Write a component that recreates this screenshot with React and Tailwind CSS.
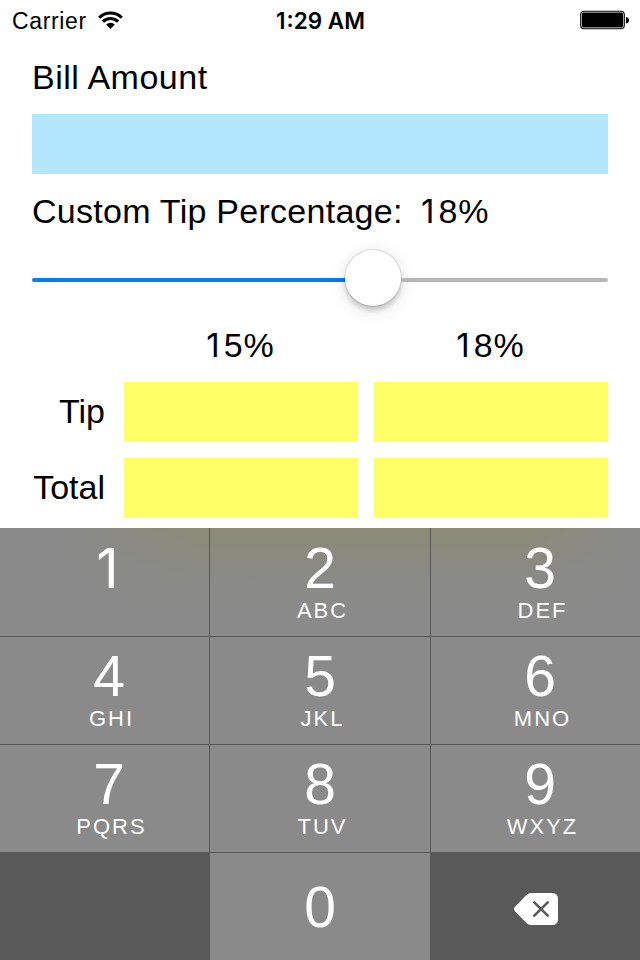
const KEYS = [
  ['1', ''], ['2', 'ABC'], ['3', 'DEF'],
  ['4', 'GHI'], ['5', 'JKL'], ['6', 'MNO'],
  ['7', 'PQRS'], ['8', 'TUV'], ['9', 'WXYZ'],
];

// Vertical rules sit at the right of column 1 and the left of column 3.
const COLUMN_STYLE = [
  'border-r border-r-[#595959] pl-[9px]',
  '',
  'border-l border-l-[#595959] pl-[9px]',
];

function StatusBar() {
  return (
    <header className="flex h-10 items-center pl-3 pr-[11px] text-[23px]">
      <div className="flex w-[200px] items-center gap-[11px]">
        <span className="w-[75px] whitespace-nowrap pt-0.5 tracking-[0.65px]">Carrier</span>
        <svg className="h-[18px] w-[25px] shrink-0" viewBox="0 0 25 18">
          <g fill="none" stroke="#000" strokeWidth="3">
            <path d="M1.2 6.7A16 16 0 0 1 23.8 6.7" />
            <path d="M4.9 10.6A10.7 10.7 0 0 1 20.1 10.6" />
          </g>
          <path d="M8.2 13.6A6 6 0 0 1 16.8 13.6L12.5 18Z" />
        </svg>
      </div>
      <div className="flex-1 whitespace-nowrap pt-0.5 text-center font-['Inter'] text-[22.5px] font-semibold"><span className="tracking-[1px]">1</span>:29 AM</div>
      <div className="flex w-[200px] items-center justify-end">
        <svg className="h-[20px] w-[49px]" viewBox="0 0 49 20">
          <rect x="0.75" y="1.25" width="43.5" height="17.5" rx="3.2" fill="none" stroke="#000" strokeWidth="1.2" />
          <rect x="2" y="2.5" width="41" height="15" rx="1.5" />
          <path d="M46 7Q49 7.5 49 10.3T46 13.5Z" />
        </svg>
      </div>
    </header>
  );
}

function Percent({ value }) {
  return (
    <>
      <span className="font-['Inter'] text-[33px] tracking-[4px]">1</span>
      <span className="tracking-[1px]">{value}</span>%
    </>
  );
}

function ResultRow({ label }) {
  return (
    <div className="flex h-[60px] items-center">
      <div className="w-[73px] pb-0.5 text-right">{label}</div>
      <div className="ml-[19px] h-full w-[234px] bg-[#ffff66]" />
      <div className="ml-4 h-full w-[234px] bg-[#ffff66]" />
    </div>
  );
}

function Digit({ value }) {
  return value === '1' ? (
    <span className="h-[54px] pr-[3px] font-['Inter'] text-[55px] font-normal leading-[54px]">{value}</span>
  ) : (
    <span className="h-[54px] text-[57px] leading-[54px]">{value}</span>
  );
}

function Key({ digit, letters, column, first }) {
  return (
    <div className={`flex h-[108px] flex-col items-center ${first ? 'pt-[13px]' : 'border-t border-t-[#595959] pt-[12px]'} ${COLUMN_STYLE[column]}`}>
      <Digit value={digit} />
      <span className="mt-1 pl-[5px] text-[22px] leading-[24px] tracking-[2px]">{letters}</span>
    </div>
  );
}

export default function App() {
  return (
    <div className="flex h-[960px] w-[640px] flex-col overflow-hidden bg-white font-['Liberation_Sans',sans-serif] text-black">
      <StatusBar />
      <main className="flex h-[488px] flex-col px-8 text-[34px] leading-[40px]">
        <div className="mt-[17px] h-[40px] tracking-[0.5px]">Bill Amount</div>
        <div className="mt-[17px] h-[60px] bg-[#b3e6ff]" />
        <div className="mt-[17px] flex h-[40px] whitespace-pre">
          <span className="w-[389px] tracking-[0.27px]">Custom Tip Percentage:</span>
          <span><Percent value="8" /></span>
        </div>
        <div className="mt-[18px] flex h-[58px] items-center">
          <div className="mt-[3px] h-1 w-[313px] rounded-l-full bg-[#007aff]" />
          <div className="h-14 w-14 rounded-full bg-white shadow-[0_0_1px_1px_rgba(0,0,0,0.13),0_5px_4px_rgba(0,0,0,0.15),0_4px_18px_rgba(0,0,0,0.12)]" />
          <div className="mt-[3px] h-1 flex-1 rounded-r-full bg-[#b6b6b6]" />
        </div>
        <div className="mt-[18px] flex h-[40px] gap-4 pl-[92px]">
          <div className="w-[232px] text-center"><Percent value="5" /></div>
          <div className="ml-0.5 w-[232px] text-center"><Percent value="8" /></div>
        </div>
        <div className="mt-[17px] flex flex-col gap-4">
          <ResultRow label="Tip" />
          <ResultRow label="Total" />
        </div>
      </main>
      <section className="grid grid-cols-[210px_220px_210px] grid-rows-4 bg-[#8a8a8a] bg-[linear-gradient(to_right,#8a8a8a_0px,#8a8a8a_70px,#8a8a8a00_200px,#8a8a8a00_530px,#8a8a8a_640px),linear-gradient(to_bottom,#8b8b76_0px,#8a8a7d_20px,#8a8a85_45px,#8a8a8a_80px)] text-white">
        {KEYS.map(([digit, letters], i) => (
          <Key key={digit} digit={digit} letters={letters} column={i % 3} first={i < 3} />
        ))}
        <div className="bg-[#595959]" />
        <div className="flex h-[108px] flex-col items-center border-t border-t-[#595959] pt-[27px]">
          <Digit value="0" />
        </div>
        <div className="flex items-center justify-center bg-[#595959] pl-[1px] pt-[6px]">
          <svg className="h-8 w-11" viewBox="0 0 44 32">
            <path fill="#fff" d="M17 0H38Q44 0 44 6V26Q44 32 38 32H17Q14.5 32 12.7 30.2L1 18.2Q-1 16 1 13.8L12.7 1.8Q14.5 0 17 0Z" />
            <path fill="none" stroke="#595959" strokeWidth="2.6" strokeLinecap="round" d="M20.3 9.3L33.7 22.7M33.7 9.3L20.3 22.7" />
          </svg>
        </div>
      </section>
    </div>
  );
}
